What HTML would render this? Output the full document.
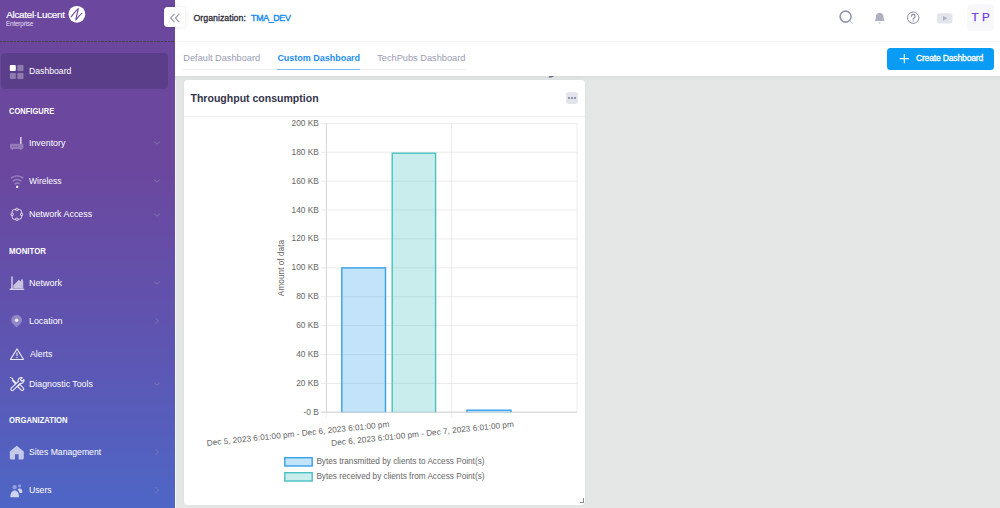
<!DOCTYPE html>
<html>
<head>
<meta charset="utf-8">
<title>Dashboard</title>
<style>
*{box-sizing:border-box;margin:0;padding:0}
html,body{width:1000px;height:508px;overflow:hidden;background:#e5e6e6;font-family:"Liberation Sans",sans-serif;}
#side{position:absolute;left:0;top:0;width:174.6px;height:508px;background:linear-gradient(180deg,#6b479e 0%,#6b479e 33%,#5d56b3 70%,#4e66c6 100%);}
#side .dash{position:absolute;left:0;top:40.8px;width:174.6px;height:1px;background:repeating-linear-gradient(90deg,#45405a 0,#45405a 2.1px,transparent 2.1px,transparent 3.5px);}
#side .active{position:absolute;left:1px;top:53.3px;width:167px;height:35.7px;border-radius:4px;background:#5b3e8a;}
.mi{position:absolute;transform-origin:0 50%;color:#fff;font-size:9.1px;line-height:12px;white-space:nowrap}
.sec{position:absolute;transform-origin:0 50%;color:#fff;font-size:8.4px;font-weight:bold;line-height:12px;white-space:nowrap}
.chev{position:absolute;width:8px;height:8px}
.ico{position:absolute;overflow:visible}
#head{position:absolute;left:175px;top:0;width:825px;height:42px;background:#fff;border-bottom:1px solid #f4f4f6}
#tabs{position:absolute;left:175px;top:42px;width:825px;height:33.7px;background:#fff;}
.tab{position:absolute;font-size:9px;color:#8a8c9c;line-height:12px;white-space:nowrap}
#card{position:absolute;left:184px;top:80px;width:401px;height:425px;background:#fff;border-radius:4px;box-shadow:0 0 3px rgba(0,0,0,0.04)}
</style>
</head>
<body>
<div style="position:absolute;left:174.6px;top:0;width:1px;height:508px;background:#f6f6f6"></div>
<div style="position:absolute;left:175px;top:75.7px;width:825px;height:4px;background:linear-gradient(180deg,#dcdcdc,#e5e6e6)"></div>
<svg style="position:absolute;left:545px;top:74px" width="12" height="6" viewBox="545 74 12 6"><path d="M548.7 77.6 L549.4 75.7 H554 L553.8 76.5 L551.2 77.6 Z" fill="#4a4a8c" fill-opacity="0.8"/></svg>
<div id="side">
  <div style="position:absolute;left:6.3px;top:8.2px;font-size:9.9px;color:#fff;-webkit-text-stroke:0.2px #fff;letter-spacing:-0.3px;line-height:13px;white-space:nowrap">Alcatel·Lucent</div>
  <div style="position:absolute;left:6px;top:19.6px;font-size:6.4px;color:#e6def2;line-height:8px;white-space:nowrap;letter-spacing:-0.2px">Enterprise</div>
  <div class="dash"></div>
  <div class="active"></div>
  <svg class="ico" style="left:0;top:0" width="175" height="508" viewBox="0 0 175 508">
    <!-- logo emblem -->
    <circle cx="76.9" cy="14.3" r="8.4" fill="#fff"/>
    <path d="M71.3 16.6 C73.6 13.6 75.8 10.6 78.3 8.6 C77.6 12 76.4 16 75.9 20 C77.6 17.6 79.6 15 81.8 13.4" fill="none" stroke="#6b479e" stroke-width="1.15" stroke-linecap="round" stroke-linejoin="round"/>
    <!-- dashboard -->
    <rect x="9.8" y="65" width="6" height="6" rx="1.1" fill="#fff"/>
    <rect x="17.3" y="65" width="6.2" height="6" rx="1.1" fill="#fff" fill-opacity="0.32"/>
    <rect x="9.8" y="72.9" width="6" height="6.1" rx="1.1" fill="#fff" fill-opacity="0.32"/>
    <rect x="17.3" y="72.9" width="6.2" height="6.1" rx="1.1" fill="#fff" fill-opacity="0.32"/>
    <!-- inventory -->
    <rect x="10" y="143.8" width="13.4" height="5.2" rx="1.2" fill="#fff" fill-opacity="0.28"/>
    <rect x="11.6" y="148.8" width="1.8" height="1.1" fill="#fff" fill-opacity="0.28"/>
    <rect x="20" y="148.8" width="1.8" height="1.1" fill="#fff" fill-opacity="0.28"/>
    <rect x="20" y="137" width="1.6" height="7" rx="0.5" fill="#fff" fill-opacity="0.72"/>
    <g fill="#6b479e" fill-opacity="0.7"><rect x="12" y="146" width="1.2" height="1"/><rect x="14.3" y="146" width="1.2" height="1"/><rect x="16.6" y="146" width="1.2" height="1"/></g>
    <!-- wireless -->
    <g fill="none" stroke="#fff" stroke-opacity="0.3" stroke-width="1.5" stroke-linecap="round">
      <path d="M11.3 177.9 A 9.6 9.6 0 0 1 22.9 177.9"/>
      <path d="M13.3 180.9 A 6.2 6.2 0 0 1 20.9 180.9"/>
      <path d="M15.2 183.7 A 3.2 3.2 0 0 1 19 183.7"/>
    </g>
    <rect x="16" y="185.8" width="2.2" height="2.2" rx="0.4" fill="#fff" fill-opacity="0.9"/>
    <!-- network access -->
    <g fill="none" stroke="#fff" stroke-opacity="0.78" stroke-width="0.95">
      <rect x="12.1" y="209.5" width="9.5" height="9.8" rx="2.3"/>
    </g>
    <g fill="#6b479e" stroke="#fff" stroke-opacity="0.85" stroke-width="0.85">
      <rect x="15.75" y="208.4" width="2.2" height="2.2" rx="0.4"/>
      <rect x="15.75" y="218.2" width="2.2" height="2.2" rx="0.4"/>
      <rect x="11" y="213.3" width="2.2" height="2.2" rx="0.4"/>
      <rect x="20.5" y="213.3" width="2.2" height="2.2" rx="0.4"/>
    </g>
    <!-- network (chart) -->
    <path d="M12 277 V289.3 M10.2 289.3 H23.6" fill="none" stroke="#fff" stroke-opacity="0.75" stroke-width="1.4" stroke-linecap="round" stroke-linejoin="round"/>
    <path d="M13.3 288.2 V285.6 L18.9 279.8 L20.4 281.4 L22 278.4 L23.2 281 V288.2 Z" fill="#fff" fill-opacity="0.66"/>
    <!-- location -->
    <path d="M16.6 327.6 C14.8 325.4 11.1 322.8 11.1 320.2 A5.5 5.4 0 0 1 22.1 320.2 C22.1 322.8 18.4 325.4 16.6 327.6 Z" fill="#fff" fill-opacity="0.3"/>
    <circle cx="16.6" cy="320.2" r="1.8" fill="#fff" fill-opacity="0.82"/>
    <!-- alerts -->
    <path d="M17 348.9 L23.5 359.4 H10.5 Z" fill="none" stroke="#fff" stroke-opacity="0.85" stroke-width="1.05" stroke-linejoin="round"/>
    <path d="M17 352.6 V356" stroke="#fff" stroke-opacity="0.85" stroke-width="1.1"/>
    <rect x="16.45" y="357" width="1.1" height="1.1" fill="#fff" fill-opacity="0.85"/>
    <!-- diagnostic tools -->
    <g fill="none" stroke="#fff" stroke-opacity="0.88" stroke-width="1.1" stroke-linecap="round" stroke-linejoin="round">
      <!-- wrench: handle bottom-left to head top-right -->
      <path d="M18.2 381.6 L11 388.4 A1.5 1.5 0 0 0 13.1 390.4 L20.2 383.5"/>
      <path d="M18.2 381.6 A3.3 3.3 0 0 1 22.2 377.6 L20.3 379.6 L21.9 381.3 L23.9 379.3 A3.3 3.3 0 0 1 20.2 383.5"/>
      <!-- screwdriver: tip top-left, handle bottom-right -->
      <path d="M10.4 377.6 L12.2 378.2 L13 379.8 L16 382.8"/>
      <path d="M12.4 380.6 L15.2 383.5"/>
      <path d="M18.9 385.2 L17.6 386.5 L21.3 390.2 A1.2 1.2 0 0 0 23 390.2 L23.4 389.8 A1.2 1.2 0 0 0 23.4 388.1 L19.9 384.4 Z"/>
    </g>
    <!-- sites -->
    <path d="M16.7 445.7 L23.8 451.6 V458.3 A1.1 1.1 0 0 1 22.7 459.4 H18.6 V454.2 H15 V459.4 H10.9 A1.1 1.1 0 0 1 9.8 458.3 V451.6 Z" fill="#fff" fill-opacity="0.66"/>
    <!-- users -->
    <circle cx="14.6" cy="487.2" r="2.1" fill="#fff" fill-opacity="0.38"/>
    <circle cx="19.6" cy="485.8" r="1.6" fill="#fff" fill-opacity="0.38"/>
    <path d="M10.4 496.2 C10.4 492.6 12.4 490.4 14.7 490.4 C17 490.4 19 492.6 19 496.2 C19 497 18.4 497.2 17.8 497.2 H11.6 C11 497.2 10.4 497 10.4 496.2 Z" fill="#fff" fill-opacity="0.72"/>
    <path d="M17.6 489.6 C18.2 488.9 18.9 488.6 19.8 488.6 C21.3 488.6 22.3 490 22.3 492 C22.3 492.8 21.9 493.1 21.3 493.1 H19.6 C19.2 491.7 18.6 490.5 17.6 489.6 Z" fill="#fff" fill-opacity="0.72"/>
  </svg>

  <div class="mi" style="left:29.0px;top:64.99px;transform:scaleX(0.9524)">Dashboard</div>
  <div class="mi" style="left:29.1px;top:136.59px;transform:scaleX(0.9723)">Inventory</div>
  <div class="mi" style="left:29.4px;top:174.59px;transform:scaleX(0.9343)">Wireless</div>
  <div class="mi" style="left:29.1px;top:208.49px;transform:scaleX(0.9762)">Network Access</div>
  <div class="mi" style="left:29.2px;top:276.79px;transform:scaleX(0.9884)">Network</div>
  <div class="mi" style="left:29.1px;top:314.69px;transform:scaleX(0.9736)">Location</div>
  <div class="mi" style="left:29.6px;top:347.69px;transform:scaleX(0.9629)">Alerts</div>
  <div class="mi" style="left:29.1px;top:377.79px;transform:scaleX(0.9667)">Diagnostic Tools</div>
  <div class="mi" style="left:29.2px;top:445.89px;transform:scaleX(0.9514)">Sites Management</div>
  <div class="mi" style="left:29.0px;top:483.79px;transform:scaleX(0.9548)">Users</div>
  <div class="sec" style="left:9.0px;top:105.22px;transform:scaleX(0.8988)">CONFIGURE</div>
  <div class="sec" style="left:8.7px;top:245.42px;transform:scaleX(0.9388)">MONITOR</div>
  <div class="sec" style="left:9.1px;top:414.02px;transform:scaleX(0.9152)">ORGANIZATION</div>

  <svg class="chev" style="left:153px;top:138.5px" viewBox="0 0 8 8"><path d="M1.2 2.6 L4 5.2 L6.8 2.6" fill="none" stroke="#8a8cb0" stroke-opacity="0.75" stroke-width="0.9"/></svg>
  <svg class="chev" style="left:153px;top:176.5px" viewBox="0 0 8 8"><path d="M1.2 2.6 L4 5.2 L6.8 2.6" fill="none" stroke="#8a8cb0" stroke-opacity="0.75" stroke-width="0.9"/></svg>
  <svg class="chev" style="left:153px;top:210.5px" viewBox="0 0 8 8"><path d="M1.2 2.6 L4 5.2 L6.8 2.6" fill="none" stroke="#8a8cb0" stroke-opacity="0.75" stroke-width="0.9"/></svg>
  <svg class="chev" style="left:153px;top:278.8px" viewBox="0 0 8 8"><path d="M1.2 2.6 L4 5.2 L6.8 2.6" fill="none" stroke="#8a8cb0" stroke-opacity="0.75" stroke-width="0.9"/></svg>
  <svg class="chev" style="left:153px;top:379.8px" viewBox="0 0 8 8"><path d="M1.2 2.6 L4 5.2 L6.8 2.6" fill="none" stroke="#8a8cb0" stroke-opacity="0.75" stroke-width="0.9"/></svg>
  <svg class="chev" style="left:153px;top:316.5px" viewBox="0 0 8 8"><path d="M2.8 1.2 L5.4 4 L2.8 6.8" fill="none" stroke="#8a8cb0" stroke-opacity="0.75" stroke-width="0.9"/></svg>
  <svg class="chev" style="left:153px;top:448px" viewBox="0 0 8 8"><path d="M2.8 1.2 L5.4 4 L2.8 6.8" fill="none" stroke="#8a8cb0" stroke-opacity="0.75" stroke-width="0.9"/></svg>
  <svg class="chev" style="left:153px;top:485.8px" viewBox="0 0 8 8"><path d="M2.8 1.2 L5.4 4 L2.8 6.8" fill="none" stroke="#8a8cb0" stroke-opacity="0.75" stroke-width="0.9"/></svg>

</div>
<div id="head">
  <div style="position:absolute;left:18.5px;top:11.7px;font-size:8.8px;color:#2c2c3c;-webkit-text-stroke:0.3px #2c2c3c;line-height:12px;white-space:nowrap">Organization:</div>
  <div style="position:absolute;left:76.1px;top:11.7px;font-size:8.8px;color:#1d8ef5;-webkit-text-stroke:0.42px #1d8ef5;line-height:12px;white-space:nowrap;letter-spacing:-0.31px">TMA_DEV</div>
  <svg style="position:absolute;left:625px;top:0" width="200" height="42" viewBox="800 0 200 42">
    <circle cx="845.6" cy="16.6" r="5.5" fill="none" stroke="#9195ae" stroke-width="1.6"/>
    <path d="M850 21 L852.6 23.4" stroke="#c9cbd8" stroke-width="1" stroke-linecap="round"/>
    <path d="M879.7 12.8 C882.3 12.8 883.6 15 883.6 17.4 C883.6 19.4 884.2 20.2 885 21 H874.4 C875.2 20.2 875.8 19.4 875.8 17.4 C875.8 15 877.1 12.8 879.7 12.8 Z" fill="#adb0c2"/>
    <circle cx="879.7" cy="22.9" r="1" fill="#d3d5df"/>
    <circle cx="913.2" cy="17.7" r="5.7" fill="none" stroke="#8a8ea9" stroke-width="1"/>
    <path d="M911.5 16.2 A1.8 1.8 0 1 1 913.9 17.9 C913.3 18.2 913.2 18.5 913.2 19.2" fill="none" stroke="#8186a3" stroke-width="1.15" stroke-linecap="round"/>
    <circle cx="913.2" cy="20.9" r="0.7" fill="#8186a3"/>
    <rect x="937.1" y="13.3" width="15.3" height="10.2" rx="2.2" fill="#e4e4ec"/>
    <path d="M943 15.9 L947.3 18.3 L943 20.7 Z" fill="#adb0c2"/>
    <rect x="967.2" y="4.3" width="26.9" height="26.7" rx="3.5" fill="#f8f8fa"/>
  </svg>
  <div style="position:absolute;left:796.6px;top:9.7px;font-size:11.6px;color:#7239ea;-webkit-text-stroke:0.25px #7239ea;line-height:14px;white-space:nowrap;letter-spacing:0.17px">T P</div>
</div>
<div style="position:absolute;left:164px;top:7.2px;width:21px;height:20.3px;border-radius:3.5px;background:#fff;box-shadow:0 0 5px rgba(0,0,0,0.10)"></div>
<svg style="position:absolute;left:164px;top:7px" width="21" height="21" viewBox="164 7 21 21"><g fill="none" stroke="#9a9cb0" stroke-width="1.1" stroke-linecap="round" stroke-linejoin="round"><path d="M174.2 14.2 L170.6 18 L174.2 21.8"/><path d="M179 14.2 L175.4 18 L179 21.8"/></g></svg>
<div id="tabs">
  <div class="tab" style="left:8.3px;top:9.9px;font-size:9.23px;color:#9a9cb3">Default Dashboard</div>
  <div class="tab" style="left:102.4px;top:10px;font-size:9px;color:#1d8ef5;font-weight:bold;letter-spacing:-0.02px">Custom Dashboard</div>
  <div class="tab" style="left:202.2px;top:9.9px;font-size:9.23px;color:#9a9cb3">TechPubs Dashboard</div>
  <div style="position:absolute;left:8.3px;top:27px;width:283px;height:1px;background:#eff0f3"></div>
  <div style="position:absolute;left:102.4px;top:26.9px;width:82.7px;height:1.5px;background:#7db9f8"></div>
  <div style="position:absolute;left:712.2px;top:5.7px;width:107.2px;height:22.6px;border-radius:3.5px;background:#0a9bf5"></div>
  <svg style="position:absolute;left:724px;top:11px" width="11" height="11" viewBox="0 0 11 11"><path d="M5.3 1 V10.2 M0.7 5.6 H9.9" stroke="#fff" stroke-width="1.1"/></svg>
  <div class="tab" style="left:740.9px;top:10.1px;font-size:8.6px;color:#fff;-webkit-text-stroke:0.3px #fff;letter-spacing:-0.19px">Create Dashboard</div>
</div>

<div id="card">
  <div style="position:absolute;left:6.5px;top:12px;font-size:10.54px;font-weight:bold;color:#34344a;line-height:13px;white-space:nowrap">Throughput consumption</div>
  <div style="position:absolute;left:0;top:36px;width:401px;height:1px;background:#f0f0f3"></div>
  <div style="position:absolute;left:382px;top:12px;width:12px;height:12px;border-radius:3px;background:#e4e4ec"></div>
  <div style="position:absolute;left:384.4px;top:17.1px;width:1.6px;height:1.9px;background:#9292b2;box-shadow:3px 0 0 #9292b2,6px 0 0 #9292b2"></div>
  <div style="position:absolute;left:395.7px;top:418.2px;width:4.3px;height:4.4px;border-right:1.1px solid #8c8c8c;border-bottom:1.1px solid #8c8c8c"></div>
</div>
<svg id="chart" style="position:absolute;left:0;top:0" width="1000" height="508" viewBox="0 0 1000 508" font-family="Liberation Sans, sans-serif">
  <g stroke="#e3e3e3" stroke-width="0.7" fill="none">
    <line x1="321" y1="412.30" x2="577" y2="412.30"/>
    <line x1="321" y1="383.41" x2="577" y2="383.41"/>
    <line x1="321" y1="354.52" x2="577" y2="354.52"/>
    <line x1="321" y1="325.63" x2="577" y2="325.63"/>
    <line x1="321" y1="296.74" x2="577" y2="296.74"/>
    <line x1="321" y1="267.85" x2="577" y2="267.85"/>
    <line x1="321" y1="238.96" x2="577" y2="238.96"/>
    <line x1="321" y1="210.07" x2="577" y2="210.07"/>
    <line x1="321" y1="181.18" x2="577" y2="181.18"/>
    <line x1="321" y1="152.29" x2="577" y2="152.29"/>
    <line x1="321" y1="123.40" x2="577" y2="123.40"/>
    <line x1="326.4" y1="123.4" x2="326.4" y2="418"/>
    <line x1="451.6" y1="123.4" x2="451.6" y2="418"/>
    <line x1="577" y1="123.4" x2="577" y2="418"/>
  </g>
  <line x1="326.4" y1="123.4" x2="326.4" y2="418" stroke="#d0d0d0" stroke-width="0.7"/>
  <line x1="321" y1="412.3" x2="577" y2="412.3" stroke="#d0d0d0" stroke-width="0.7"/>
  <rect x="341.8" y="267.9" width="43.7" height="145" fill="rgba(54,162,235,0.3)" stroke="#36a2eb" stroke-width="1.4"/>
  <rect x="392.2" y="153.2" width="43.4" height="260" fill="rgba(75,192,192,0.3)" stroke="#4bc0c0" stroke-width="1.4"/>
  <rect x="467" y="410.2" width="44" height="3" fill="rgba(54,162,235,0.3)" stroke="#36a2eb" stroke-width="1.4"/>
  <rect x="320" y="412.7" width="258" height="6" fill="#fff"/>
  <g stroke="#e3e3e3" stroke-width="0.7"><line x1="326.4" y1="412" x2="326.4" y2="418"/><line x1="451.6" y1="412" x2="451.6" y2="418"/></g>
  <line x1="321" y1="412.3" x2="577" y2="412.3" stroke="#d6d6d6" stroke-width="0.8"/>
  <g font-size="8.3" fill="#666" text-anchor="end">
    <text x="318.8" y="414.80">-0 B</text>
    <text x="318.8" y="385.91">20 KB</text>
    <text x="318.8" y="357.02">40 KB</text>
    <text x="318.8" y="328.13">60 KB</text>
    <text x="318.8" y="299.24">80 KB</text>
    <text x="318.8" y="270.35">100 KB</text>
    <text x="318.8" y="241.46">120 KB</text>
    <text x="318.8" y="212.57">140 KB</text>
    <text x="318.8" y="183.68">160 KB</text>
    <text x="318.8" y="154.79">180 KB</text>
    <text x="318.8" y="125.90">200 KB</text>
  </g>
  <text font-size="8.3" fill="#666" text-anchor="middle" transform="translate(284,268) rotate(-90)">Amount of data</text>
  <g font-size="8.25" fill="#666" text-anchor="end">
    <text transform="translate(389.5,426.8) rotate(-6)">Dec 5, 2023 6:01:00 pm - Dec 6, 2023 6:01:00 pm</text>
    <text transform="translate(514,426.8) rotate(-6)">Dec 6, 2023 6:01:00 pm - Dec 7, 2023 6:01:00 pm</text>
  </g>
  <rect x="284.8" y="457.7" width="27.4" height="8.3" fill="rgba(54,162,235,0.3)" stroke="#36a2eb" stroke-width="1.4"/>
  <rect x="284.8" y="472.7" width="27.4" height="8.3" fill="rgba(75,192,192,0.3)" stroke="#4bc0c0" stroke-width="1.4"/>
  <g font-size="8.23" fill="#666">
    <text x="316.4" y="464.3">Bytes transmitted by clients to Access Point(s)</text>
    <text x="316.4" y="479.3">Bytes received by clients from Access Point(s)</text>
  </g>
</svg>
</body>
</html>
